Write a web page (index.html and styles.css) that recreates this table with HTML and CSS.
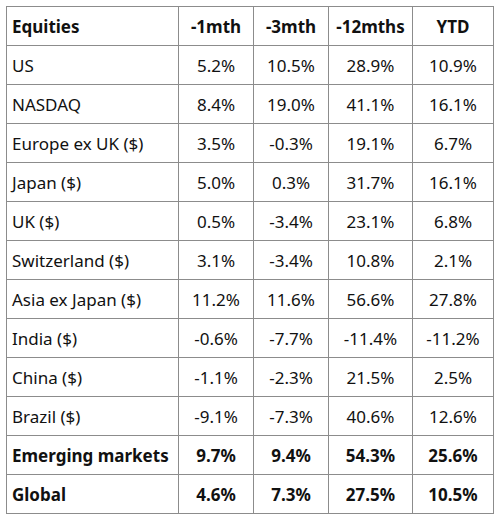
FILE: index.html
```html
<!DOCTYPE html>
<html lang="en">
<head>
  <meta charset="UTF-8">
  <title>Equities performance</title>
  <link rel="stylesheet" href="styles.css">
</head>
<body>
  <!-- Equities returns table -->
  <table class="returns">
    <colgroup>
      <col class="col-name">
      <col class="col-short">
      <col class="col-short">
      <col class="col-long">
      <col class="col-ytd">
    </colgroup>
    <thead>
      <tr>
        <th>Equities</th>
        <th>-1mth</th>
        <th>-3mth</th>
        <th>-12mths</th>
        <th>YTD</th>
      </tr>
    </thead>
    <tbody>
      <tr><td>US</td><td>5.2%</td><td>10.5%</td><td>28.9%</td><td>10.9%</td></tr>
      <tr><td>NASDAQ</td><td>8.4%</td><td>19.0%</td><td>41.1%</td><td>16.1%</td></tr>
      <tr><td>Europe ex UK ($)</td><td>3.5%</td><td>-0.3%</td><td>19.1%</td><td>6.7%</td></tr>
      <tr><td>Japan ($)</td><td>5.0%</td><td>0.3%</td><td>31.7%</td><td>16.1%</td></tr>
      <tr><td>UK ($)</td><td>0.5%</td><td>-3.4%</td><td>23.1%</td><td>6.8%</td></tr>
      <tr><td>Switzerland ($)</td><td>3.1%</td><td>-3.4%</td><td>10.8%</td><td>2.1%</td></tr>
      <tr><td>Asia ex Japan ($)</td><td>11.2%</td><td>11.6%</td><td>56.6%</td><td>27.8%</td></tr>
      <tr><td>India ($)</td><td>-0.6%</td><td>-7.7%</td><td>-11.4%</td><td>-11.2%</td></tr>
      <tr><td>China ($)</td><td>-1.1%</td><td>-2.3%</td><td>21.5%</td><td>2.5%</td></tr>
      <tr><td>Brazil ($)</td><td>-9.1%</td><td>-7.3%</td><td>40.6%</td><td>12.6%</td></tr>
      <tr class="total"><td>Emerging markets</td><td>9.7%</td><td>9.4%</td><td>54.3%</td><td>25.6%</td></tr>
      <tr class="total"><td>Global</td><td>4.6%</td><td>7.3%</td><td>27.5%</td><td>10.5%</td></tr>
    </tbody>
  </table>
</body>
</html>
```

FILE: styles.css
```css
body {
  margin: 0;
  padding: 6px;
  background-color: #fff;
  font-family: 'Noto Sans', 'Open Sans', sans-serif;
  color: #111;
}

.returns {
  border-collapse: collapse;
  table-layout: fixed;
  width: 487px;
  font-size: 17px;
  line-height: 20px;
}

.col-name { width: 172px; }
.col-short { width: 75px; }
.col-long { width: 84px; }
.col-ytd { width: 81px; }

.returns th,
.returns td {
  box-sizing: border-box;
  height: 39px;
  padding: 2px 3px 0;
  border: 1px solid #8c8c8c;
  text-align: center;
  white-space: nowrap;
}

.returns th {
  font-weight: 700;
}

.returns th:first-child,
.returns td:first-child {
  text-align: left;
  padding-left: 5px;
}

.returns .total td {
  font-weight: 700;
}
```
